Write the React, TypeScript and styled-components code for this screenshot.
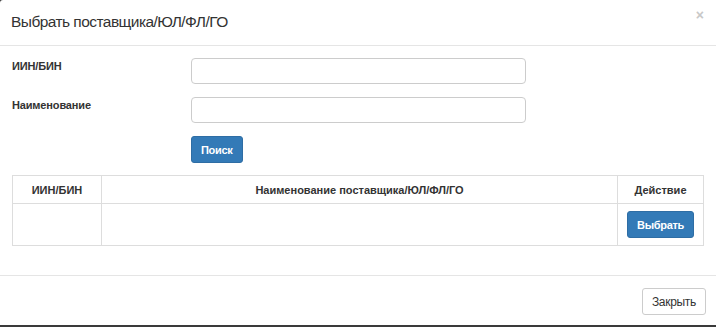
import React from "react";
import styled, { createGlobalStyle } from "styled-components";

const Global = createGlobalStyle`
  html, body { margin: 0; padding: 0; background: #3a3a3a; }
  body { font-family: "Liberation Sans", Arial, sans-serif; color: #333; }
  * { box-sizing: border-box; }
`;

const Modal = styled.div`
  width: 716px;
  height: 325px;
  background: #fff;
  border-top-left-radius: 3px;
  display: flex;
  flex-direction: column;
`;

const Header = styled.div`
  height: 46px;
  border-bottom: 1px solid #e5e5e5;
  display: flex;
  align-items: center;
  justify-content: space-between;
  padding: 0 11px 2px 11px;
`;

const Title = styled.h4`
  margin: 0;
  font-size: 15.5px;
  font-weight: normal;
  color: #333;
  letter-spacing: -0.55px;
`;

const Close = styled.span`
  font-size: 14px;
  font-weight: bold;
  color: #c8c8c8;
  margin-top: -14px;
  margin-right: 1px;
`;

const Body = styled.div`
  padding: 12px 12px 0 12px;
  flex: 1;
`;

const FormRow = styled.div`
  display: grid;
  grid-template-columns: 179px 335px;
  margin-bottom: 13px;
`;

const Label = styled.label`
  font-size: 11px;
  font-weight: bold;
  color: #333;
  padding-top: 2px;
  letter-spacing: -0.15px;
`;

const Input = styled.input`
  height: 26px;
  border: 1px solid #ccc;
  border-radius: 4px;
  background: #fff;
`;

const ButtonRow = styled.div`
  padding-left: 179px;
  margin-top: 1px;
  margin-bottom: 12px;
`;

const PrimaryButton = styled.button`
  height: 27px;
  padding: 0 9px;
  background: #337ab7;
  border: 1px solid #2e6da4;
  border-radius: 3px;
  color: #fff;
  font-family: "Liberation Sans", Arial, sans-serif;
  font-weight: bold;
  font-size: 11px;
  letter-spacing: -0.3px;
`;

const Table = styled.table`
  width: 692px;
  border-collapse: collapse;
  font-size: 11px;
  margin-top: 1px;
`;

const Th = styled.th<{ $w?: number }>`
  border: 1px solid #ddd;
  height: 28px;
  font-weight: bold;
  color: #333;
  text-align: center;
  ${(p) => (p.$w ? `width: ${p.$w}px;` : "")}
`;

const Td = styled.td`
  border: 1px solid #ddd;
  height: 42px;
  text-align: center;
`;

const Footer = styled.div`
  border-top: 1px solid #e5e5e5;
  display: flex;
  justify-content: flex-end;
  padding: 12px 10px 10px 10px;
`;

const DefaultButton = styled.button`
  height: 27px;
  padding: 0 9px;
  background: #fff;
  border: 1px solid #ccc;
  border-radius: 3px;
  color: #333;
  font-family: "Liberation Sans", Arial, sans-serif;
  font-size: 12px;
  letter-spacing: -0.3px;
`;

export default function App() {
  return (
    <>
      <Global />
      <Modal>
        <Header>
          <Title>Выбрать поставщика/ЮЛ/ФЛ/ГО</Title>
          <Close>×</Close>
        </Header>
        <Body>
          <FormRow>
            <Label>ИИН/БИН</Label>
            <Input />
          </FormRow>
          <FormRow>
            <Label>Наименование</Label>
            <Input />
          </FormRow>
          <ButtonRow>
            <PrimaryButton>Поиск</PrimaryButton>
          </ButtonRow>
          <Table>
            <thead>
              <tr>
                <Th $w={89}>ИИН/БИН</Th>
                <Th>Наименование поставщика/ЮЛ/ФЛ/ГО</Th>
                <Th $w={86}>Действие</Th>
              </tr>
            </thead>
            <tbody>
              <tr>
                <Td></Td>
                <Td></Td>
                <Td>
                  <PrimaryButton>Выбрать</PrimaryButton>
                </Td>
              </tr>
            </tbody>
          </Table>
        </Body>
        <Footer>
          <DefaultButton>Закрыть</DefaultButton>
        </Footer>
      </Modal>
    </>
  );
}
